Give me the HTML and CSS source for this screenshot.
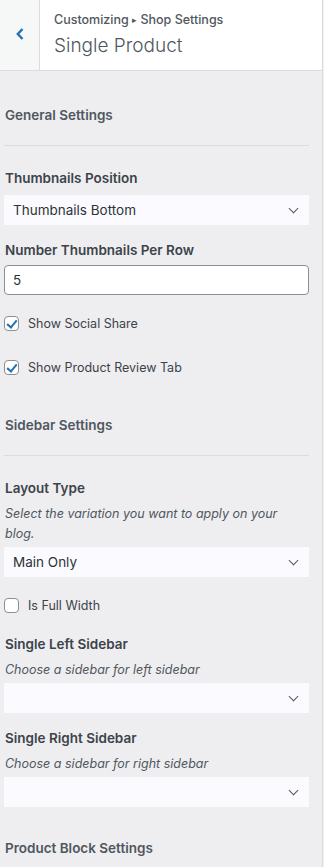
FILE: index.html
```html
<!DOCTYPE html>
<html lang="en">
<head>
    <meta charset="UTF-8">
    <meta name="viewport" content="width=device-width, initial-scale=1.0">
    <title>Customizing - Single Product</title>
    <link rel="stylesheet" href="styles.css">
</head>
<body>
    <div class="pane">
        <div class="pane-header">
            <button class="back-button" aria-label="Back">
                <svg width="10" height="14" viewBox="0 0 10 14"><path d="M7.5 2 L2.8 7 L7.5 12" fill="none" stroke="#2271b1" stroke-width="2.4"/></svg>
            </button>
            <div class="pane-title">
                <div class="crumb">Customizing <span class="crumb-arrow">▸</span> Shop Settings</div>
                <h2>Single Product</h2>
            </div>
        </div>

        <div class="controls">
            <div class="section-title">General Settings</div>
            <hr class="divider">

            <div class="control">
                <label class="control-label">Thumbnails Position</label>
                <div class="select">Thumbnails Bottom<span class="chevron"></span></div>
            </div>

            <div class="control">
                <label class="control-label">Number Thumbnails Per Row</label>
                <input class="text-input" type="text" value="5">
            </div>

            <label class="check"><span class="box checked"></span>Show Social Share</label>
            <label class="check"><span class="box checked"></span>Show Product Review Tab</label>

            <div class="section-title sidebar-title">Sidebar Settings</div>
            <hr class="divider">

            <div class="control">
                <label class="control-label">Layout Type</label>
                <div class="description">Select the variation you want to apply on your blog.</div>
                <div class="select">Main Only<span class="chevron"></span></div>
            </div>

            <label class="check"><span class="box"></span>Is Full Width</label>

            <div class="control">
                <label class="control-label">Single Left Sidebar</label>
                <div class="description">Choose a sidebar for left sidebar</div>
                <div class="select"><span class="chevron"></span></div>
            </div>

            <div class="control">
                <label class="control-label">Single Right Sidebar</label>
                <div class="description">Choose a sidebar for right sidebar</div>
                <div class="select"><span class="chevron"></span></div>
            </div>

            <div class="section-title block-title">Product Block Settings</div>
        </div>
    </div>
</body>
</html>
```

FILE: styles.css
```css
* {
    margin: 0;
    padding: 0;
    box-sizing: border-box;
}

body {
    font-family: Inter, "Liberation Sans", sans-serif;
    background-color: #f0f0f1;
    color: #3c434a;
    width: 324px;
    height: 867px;
    overflow: hidden;
}

.pane {
    width: 323px;
    height: 867px;
    border-right: 1px solid #dcdcde;
    background-color: #eeeef0;
}

.pane-header {
    display: flex;
    height: 71px;
    background-color: #fff;
    border-bottom: 1px solid #dcdcde;
}

.back-button {
    width: 40px;
    flex-shrink: 0;
    background-color: #f6f7f7;
    border: none;
    border-right: 1px solid #dcdcde;
    display: flex;
    align-items: center;
    justify-content: center;
    padding-bottom: 3px;
}

.pane-title {
    padding: 12px 0 0 14px;
}

.crumb {
    font-size: 12.5px;
    font-weight: 500;
    color: #50575e;
    line-height: 16px;
}

.crumb-arrow {
    font-size: 9px;
    vertical-align: 1px;
}

.pane-title h2 {
    font-size: 19px;
    font-weight: 300;
    color: #50575e;
    line-height: 26px;
    margin-top: 5px;
}

.controls {
    padding: 0 13px 0 4px;
}

.section-title {
    font-size: 13.5px;
    font-weight: 600;
    color: #50575e;
    line-height: 18px;
    padding: 35px 0 0 1px;
}

.sidebar-title {
    padding-top: 41px;
}

.block-title {
    padding-top: 32px;
}

.divider {
    border: none;
    border-top: 1px solid #dcdcde;
    margin: 21px 0 0;
}

.control {
    margin-top: 23px;
}

.control + .control {
    margin-top: 16px;
}

.control-label {
    display: block;
    font-size: 13.5px;
    font-weight: 600;
    color: #3c434a;
    line-height: 18px;
    padding-left: 1px;
    margin-bottom: 8px;
}

.description {
    font-size: 12.5px;
    font-style: italic;
    color: #50575e;
    line-height: 20px;
    margin-top: -1px;
    margin-bottom: 3px;
    padding-left: 1px;
}

.select {
    position: relative;
    height: 30px;
    background-color: #fbfbff;
    font-size: 13.5px;
    color: #2c3338;
    line-height: 30px;
    padding-left: 9px;
}

.chevron {
    position: absolute;
    right: 12px;
    top: 10px;
    width: 7px;
    height: 7px;
    border-right: 1.4px solid #50575e;
    border-bottom: 1.4px solid #50575e;
    transform: rotate(45deg);
}

.text-input {
    display: block;
    width: 100%;
    height: 30px;
    margin-top: -2px;
    border: 1px solid #8c8f94;
    border-radius: 4px;
    background-color: #fff;
    font-family: inherit;
    font-size: 13.5px;
    color: #2c3338;
    padding-left: 8px;
}

.check {
    display: flex;
    align-items: center;
    gap: 9px;
    font-size: 12.5px;
    color: #3c434a;
    height: 16px;
}

.control + .check {
    margin-top: 20px;
}

.check + .check {
    margin-top: 28px;
}

.check + .control {
    margin-top: 22px;
}

.box {
    width: 15px;
    height: 15px;
    border: 1px solid #8c8f94;
    border-radius: 4px;
    background-color: #fff;
    position: relative;
    flex-shrink: 0;
}

.box.checked::after {
    content: '';
    position: absolute;
    left: 4px;
    top: 1px;
    width: 4px;
    height: 8px;
    border-right: 2px solid #2271b1;
    border-bottom: 2px solid #2271b1;
    transform: rotate(40deg);
}
```
